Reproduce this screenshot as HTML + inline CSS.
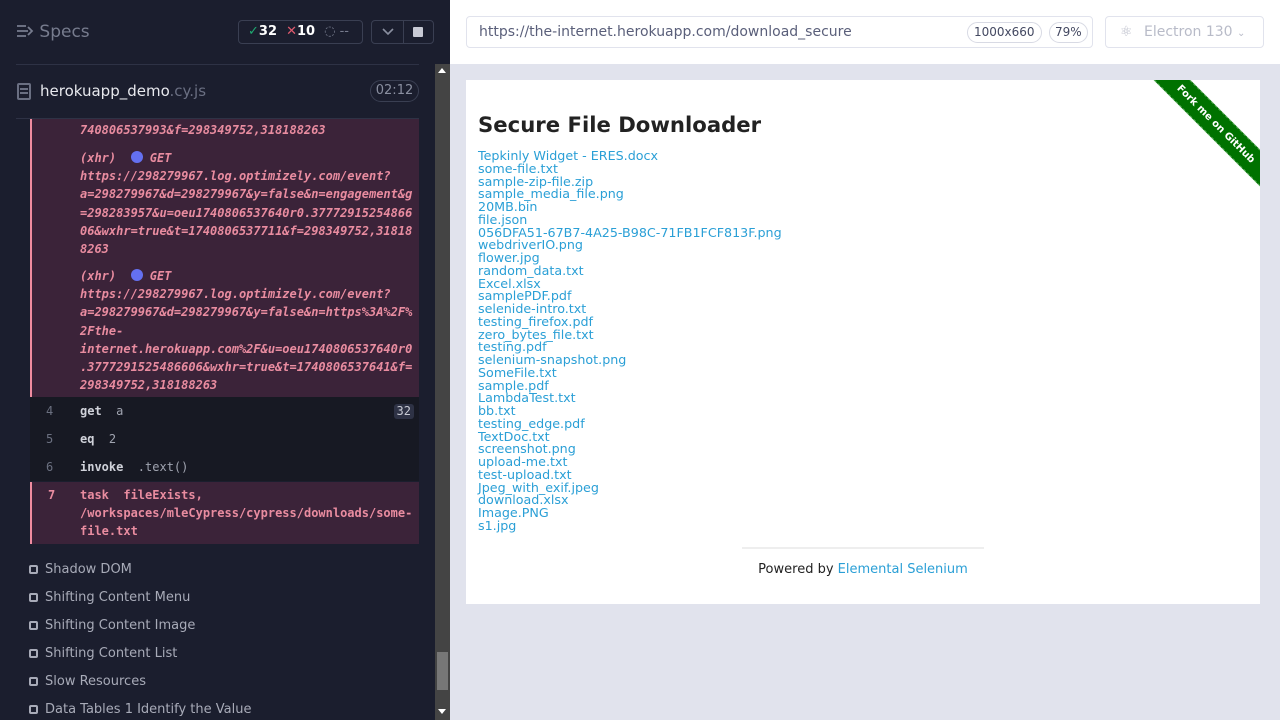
<!DOCTYPE html>
<html><head><meta charset="utf-8"><style>
*,*:before{margin:0;padding:0;box-sizing:border-box}
body{width:1280px;height:720px;overflow:hidden;background:#1b1e2e;font-family:"DejaVu Sans","Liberation Sans",sans-serif;position:relative}
.abs{position:absolute}
.mono{font-family:"DejaVu Sans Mono","Liberation Mono",monospace}
.red{background:#3b2339;border-left:2px solid #f08ca0}
.rl{color:#e98ca0;font-size:12px;font-style:italic;font-weight:bold;line-height:18.2px}
.row{position:absolute;left:30px;width:389px;height:28px;background:#171923;font-size:12px;line-height:28px}
.row .n{position:absolute;left:16px;color:#6b7080}
.row .c{position:absolute;left:50px;color:#d0d2da;font-weight:bold}
.row .a{color:#a0a4b0;font-weight:normal}
.it{position:absolute;left:29px;font-size:13px;color:#a8abb8}
.it:before{content:"";display:inline-block;width:9px;height:9px;border:2px solid #a8abb8;border-radius:2px;margin-right:7px;vertical-align:-1px}
.links a{display:block;color:#2a9fd6;text-decoration:none;font-size:12.7px;line-height:12.75px;height:12.75px}
</style></head><body>
<div class="abs" style="left:16px;top:22px;color:#777c8e;font-size:17px">
<svg width="18" height="14" style="vertical-align:-1px" viewBox="0 0 18 14"><path d="M1 2h9M1 7h11M1 12h9M12 3l4 4-4 4" stroke="#777c8e" stroke-width="1.8" fill="none"/></svg> Specs</div>
<div class="abs" style="left:238px;top:20px;width:125px;height:24px;border:1px solid #3a3f52;border-radius:4px;font-size:13px;font-weight:bold;color:#fff;line-height:22px;padding-left:9px">
<span style="color:#1fa971">✓</span>32 &nbsp;<span style="color:#e05a6e">✕</span>10 &nbsp;<span style="color:#777c8e;font-weight:normal">◌ --</span></div>
<div class="abs" style="left:371px;top:20px;width:63px;height:24px;border:1px solid #3a3f52;border-radius:4px"><div class="abs" style="left:31px;top:0;width:1px;height:22px;background:#3a3f52"></div>
<svg class="abs" style="left:10px;top:7px" width="12" height="8"><path d="M1 1l5 5 5-5" stroke="#8a8fa0" stroke-width="1.6" fill="none"/></svg>
<div class="abs" style="left:41px;top:6px;width:10px;height:10px;background:#c8cad4;border-radius:1px"></div></div>
<div class="abs" style="left:16px;top:64px;width:403px;height:1px;background:#2e3245"></div>
<div class="abs" style="left:17px;top:83px;width:14px;height:17px;border:2px solid #6a6f82;border-radius:2px"></div>
<div class="abs" style="left:20px;top:88px;width:8px;height:2px;background:#6a6f82;box-shadow:0 4px 0 #6a6f82"></div>
<div class="abs" style="left:40px;top:82px;font-size:15px;color:#e8e9ee">herokuapp_demo<span style="color:#6a6f82">.cy.js</span></div>
<div class="abs" style="left:370px;top:80px;width:49px;height:22px;border:1px solid #3a3f52;border-radius:11px;color:#8a8fa0;font-size:13px;line-height:20px;text-align:center">02:12</div>
<div class="abs" style="left:16px;top:118px;width:403px;height:1px;background:#2e3245"></div>
<div class="abs red mono" style="left:30px;top:119px;width:389px;height:278px">
<div class="rl abs" style="left:48px;top:2px">740806537993&amp;f=298349752,318188263</div>
<div class="rl abs" style="left:48px;top:30px;width:340px;word-break:break-all">(xhr) &nbsp;<span style="display:inline-block;width:12px;height:12px;border-radius:6px;background:#6470f0;vertical-align:-1px"></span> GET<br>https://298279967.log.optimizely.com/event?<br>a=298279967&amp;d=298279967&amp;y=false&amp;n=engagement&amp;g<br>=298283957&amp;u=oeu1740806537640r0.37772915254866<br>06&amp;wxhr=true&amp;t=1740806537711&amp;f=298349752,31818<br>8263</div>
<div class="rl abs" style="left:48px;top:148px">(xhr) &nbsp;<span style="display:inline-block;width:12px;height:12px;border-radius:6px;background:#6470f0;vertical-align:-1px"></span> GET<br>https://298279967.log.optimizely.com/event?<br>a=298279967&amp;d=298279967&amp;y=false&amp;n=https%3A%2F%<br>2Fthe-<br>internet.herokuapp.com%2F&amp;u=oeu1740806537640r0<br>.3777291525486606&amp;wxhr=true&amp;t=1740806537641&amp;f=<br>298349752,318188263</div>
</div>
<div class="row mono" style="top:397px"><span class="n">4</span><span class="c">get &nbsp;<span class="a">a</span></span><span class="abs" style="right:5px;top:7px;height:15px;line-height:15px;padding:0 3px;background:#2e3245;color:#c8cad4;border-radius:3px">32</span></div>
<div class="row mono" style="top:425px"><span class="n">5</span><span class="c">eq &nbsp;<span class="a">2</span></span></div>
<div class="row mono" style="top:453px"><span class="n">6</span><span class="c">invoke &nbsp;<span class="a">.text()</span></span></div>
<div class="abs red mono" style="left:30px;top:482px;width:389px;height:62px;color:#e98ca0;font-size:12px;font-weight:bold;line-height:18px">
<span class="abs" style="left:16px;top:4px">7</span><span class="abs" style="left:48px;top:4px">task &nbsp;fileExists,<br>/workspaces/mleCypress/cypress/downloads/some-<br>file.txt</span></div>
<div class="it" style="top:562px">Shadow DOM</div>
<div class="it" style="top:590px">Shifting Content Menu</div>
<div class="it" style="top:618px">Shifting Content Image</div>
<div class="it" style="top:646px">Shifting Content List</div>
<div class="it" style="top:674px">Slow Resources</div>
<div class="it" style="top:702px">Data Tables 1 Identify the Value</div>
<div class="abs" style="left:435px;top:64px;width:15px;height:656px;background:#444"></div>
<div class="abs" style="left:437px;top:652px;width:11px;height:38px;background:#777"></div>
<div class="abs" style="left:438px;top:68px;border:4px solid transparent;border-bottom:5px solid #fff;border-top:0"></div>
<div class="abs" style="left:438px;top:709px;border:4px solid transparent;border-top:5px solid #fff;border-bottom:0"></div>
<div class="abs" style="left:450px;top:0;width:830px;height:64px;background:#fff"></div>
<div class="abs" style="left:450px;top:64px;width:830px;height:656px;background:#e1e3ed"></div>
<div class="abs" style="left:466px;top:16px;width:627px;height:32px;border:1px solid #e1e3ed;border-radius:4px;font-size:14px;color:#5a5f7a;line-height:30px;padding-left:12px">https://the-internet.herokuapp.com/download_secure
<span class="abs" style="left:500px;top:5px;height:21px;line-height:19px;border:1px solid #d8dae4;border-radius:11px;padding:0 6px;font-size:12px;color:#434861">1000x660</span>
<span class="abs" style="left:582px;top:5px;height:21px;line-height:19px;border:1px solid #d8dae4;border-radius:11px;padding:0 5px;font-size:12px;color:#434861">79%</span></div>
<div class="abs" style="left:1105px;top:16px;width:159px;height:32px;border:1px solid #e1e3ed;border-radius:4px;font-size:14px;color:#b8bbc8;line-height:30px;padding-left:38px">Electron 130 <span style="font-size:10px">⌄</span>
<span class="abs" style="left:14px;top:0;font-size:14px">⚛</span></div>
<div class="abs" style="left:466px;top:80px;width:794px;height:524px;background:#fff;overflow:hidden">
<div class="abs" style="left:12px;top:32px;font-size:21.2px;font-weight:bold;color:#222">Secure File Downloader</div>
<div class="abs links" style="left:12px;top:70px">
<a>Tepkinly Widget - ERES.docx</a><a>some-file.txt</a><a>sample-zip-file.zip</a><a>sample_media_file.png</a><a>20MB.bin</a><a>file.json</a><a>056DFA51-67B7-4A25-B98C-71FB1FCF813F.png</a><a>webdriverIO.png</a><a>flower.jpg</a><a>random_data.txt</a><a>Excel.xlsx</a><a>samplePDF.pdf</a><a>selenide-intro.txt</a><a>testing_firefox.pdf</a><a>zero_bytes_file.txt</a><a>testing.pdf</a><a>selenium-snapshot.png</a><a>SomeFile.txt</a><a>sample.pdf</a><a>LambdaTest.txt</a><a>bb.txt</a><a>testing_edge.pdf</a><a>TextDoc.txt</a><a>screenshot.png</a><a>upload-me.txt</a><a>test-upload.txt</a><a>Jpeg_with_exif.jpeg</a><a>download.xlsx</a><a>Image.PNG</a><a>s1.jpg</a></div>
<div class="abs" style="left:276px;top:467px;width:242px;height:2px;background:#eee"></div>
<div class="abs" style="left:0;top:482px;width:794px;text-align:center;font-size:13px;color:#222">Powered by <span style="color:#2a9fd6">Elemental Selenium</span></div>
<div class="abs" style="left:650px;top:31px;width:200px;height:26px;background:#007200;transform:rotate(45deg);color:#fff;font-size:10px;font-weight:bold;text-align:center;line-height:26px;border-top:1px dashed #5a5;border-bottom:1px dashed #5a5">Fork me on GitHub</div>
</div>
</body></html>
